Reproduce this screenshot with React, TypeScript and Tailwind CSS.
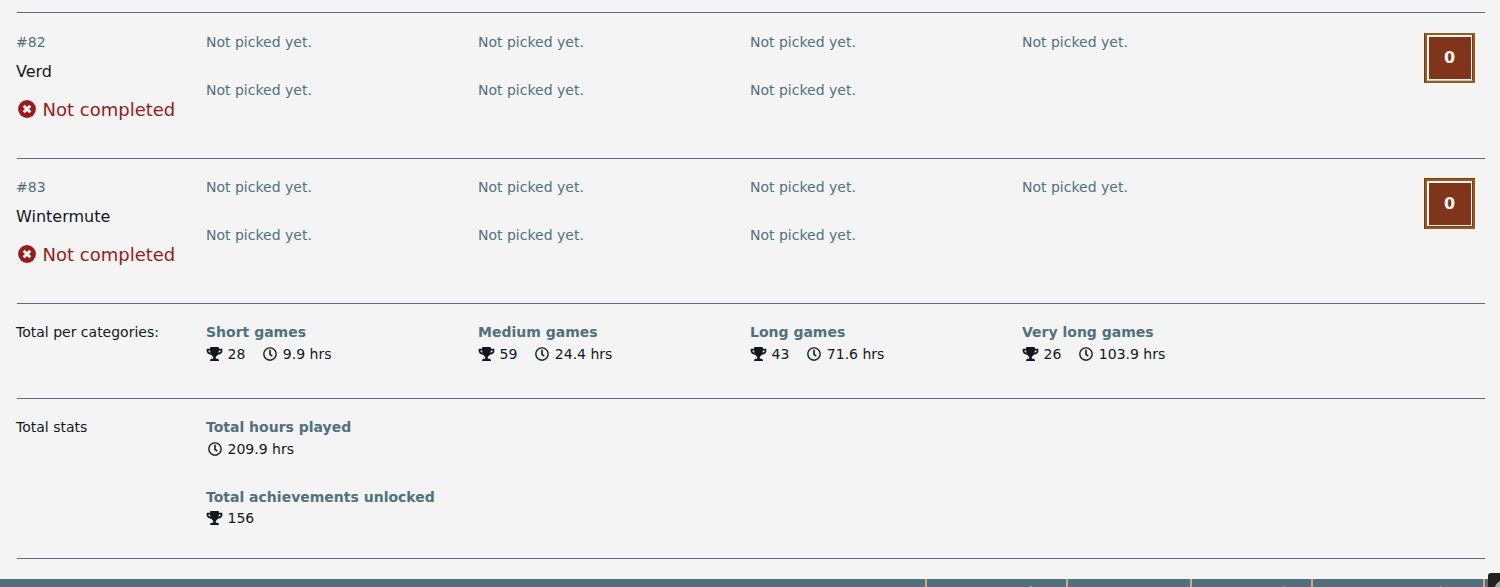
import type { ReactNode } from "react";
import { FaTrophy, FaRegClock } from "react-icons/fa";

function Row({ height, label, children, side, pad = "pt-[18px]" }: { height: string; label: ReactNode; children: ReactNode; side?: ReactNode; pad?: string }) {
  return (
    <section className={`ml-[17px] mr-[15px] flex border-t border-[#50717b] ${height}`}>
      <div className={`-ml-px w-[190px] shrink-0 ${pad}`}>{label}</div>
      <div className={`grow ${pad}`}>{children}</div>
      {side}
    </section>
  );
}

function Badge({ first }: { first: boolean }) {
  return (
    <div
      className={
        first
          ? "mr-2.5 mt-5 h-[50px] w-[51px] shrink-0 border-l border-[#80351a]"
          : "mr-2.5 mt-[19px] h-[51px] w-[51px] shrink-0 border-l border-t border-[#80351a]"
      }
    >
      <div className="h-[50px] w-[50px] border-2 border-[#965c1c]">
        <div className={`h-[46px] w-[46px] border-r border-b border-r-[#80351a] ${first ? "border-b-[#cbc2bb]" : "border-b-[#80351a]"}`}>
          <div className="flex h-[45px] w-[45px] items-center justify-center border-t-2 border-r border-b border-l-2 border-[#f8f6f2] bg-[#80351a] pr-px text-base font-bold text-[#f4f4f4]">
            0
          </div>
        </div>
      </div>
    </div>
  );
}

function CrossCircle() {
  return (
    <svg className="mb-[1.5px] ml-[2px] mr-[6.5px] h-[18px] w-[18px]" viewBox="0 0 18 18">
      <circle cx="9" cy="9" r="8.9" fill="currentColor" />
      <path d="M5.7 5.7l6.6 6.6M12.3 5.7l-6.6 6.6" stroke="#f4f4f4" strokeWidth="3" />
    </svg>
  );
}

function Player({ id, name, height, first = false }: { id: number; name: string; height: string; first?: boolean }) {
  return (
    <Row
      height={height}
      pad={first ? "pt-[19px]" : "pt-[18px]"}
      side={<Badge first={first} />}
      label={
        <>
          <div className="leading-5 text-[#50717b]">#{id}</div>
          <div className="mt-2 text-base leading-6">{name}</div>
          <div className="mt-3 flex items-center whitespace-nowrap text-lg leading-7 text-[#991b1b]">
            <CrossCircle />
            Not completed
          </div>
        </>
      }
    >
      <div className="grid grid-cols-[repeat(4,272px)] gap-y-7 leading-5 text-[#50717b]">
        {Array.from({ length: 7 }, (_, i) => (
          <span key={i}>Not picked yet.</span>
        ))}
      </div>
    </Row>
  );
}

function Trophies({ value }: { value: number }) {
  return (
    <span className="flex items-center">
      <FaTrophy className="mr-[4.5px] h-[14px] w-[17px]" />
      {value}
    </span>
  );
}

function Hours({ value }: { value: string }) {
  return (
    <span className="flex items-center">
      <FaRegClock className="ml-[1.5px] mr-[6px] h-[14px] w-[14px]" strokeWidth="3" />
      {value} hrs
    </span>
  );
}

const categories = [
  { name: "Short games", trophies: 28, hours: "9.9" },
  { name: "Medium games", trophies: 59, hours: "24.4" },
  { name: "Long games", trophies: 43, hours: "71.6" },
  { name: "Very long games", trophies: 26, hours: "103.9" },
];

export default function App() {
  return (
    <main className="flex h-[587px] flex-col overflow-hidden bg-[#f4f4f4] pt-3 font-['DejaVu_Sans',sans-serif] text-sm text-[#11191c]">
      <Player id={82} name="Verd" height="h-[146px]" first />
      <Player id={83} name="Wintermute" height="h-[145px]" />
      <Row height="h-[95px]" label={<div className="leading-5">Total per categories:</div>}>
        <div className="grid grid-cols-[repeat(4,272px)]">
          {categories.map((c) => (
            <div key={c.name}>
              <h3 className="font-bold leading-5 text-[#50717b]">{c.name}</h3>
              <div className="mt-0.5 flex gap-4 leading-5">
                <Trophies value={c.trophies} />
                <Hours value={c.hours} />
              </div>
            </div>
          ))}
        </div>
      </Row>
      <Row height="h-[160px]" label={<div className="leading-5">Total stats</div>}>
        <h3 className="font-bold leading-5 text-[#50717b]">Total hours played</h3>
        <div className="mt-0.5 leading-5">
          <Hours value="209.9" />
        </div>
        <h3 className="mt-7 font-bold leading-5 text-[#50717b]">Total achievements unlocked</h3>
        <div className="mt-px leading-5">
          <Trophies value={156} />
        </div>
      </Row>
      <div className="ml-[17px] mr-[15px] h-px shrink-0 bg-[#50717b]" />
      <footer className="relative mt-5 flex h-2 shrink-0 bg-[#50717b]">
        <div className="w-[927px] border-r-2 border-[#d9a47c]" />
        <div className="w-[141px] border-r-2 border-[#d9a47c]" />
        <div className="w-[124px] border-r-2 border-[#d9a47c]" />
        <div className="w-[121px] border-r-2 border-[#d9a47c]" />
        <div className="w-[172px] border-r-2 border-[#d9a47c]" />
        <i className="absolute bottom-0 left-[1030px] h-px w-[2px] bg-[#c9a46c]" />
        <i className="absolute bottom-0 left-[1284px] h-px w-px bg-[#d9a45c]" />
        <i className="absolute bottom-0 left-[1440px] h-px w-px bg-[#d9a45c]" />
        <svg className="absolute bottom-0 right-0 h-[14px] w-3" viewBox="0 0 12 14">
          <path d="M0 14V3q0-3 3-3h9v14z" fill="#222" />
          <path d="M7 14q1-4 5-6v6z" fill="#aaa" />
        </svg>
      </footer>
    </main>
  );
}
